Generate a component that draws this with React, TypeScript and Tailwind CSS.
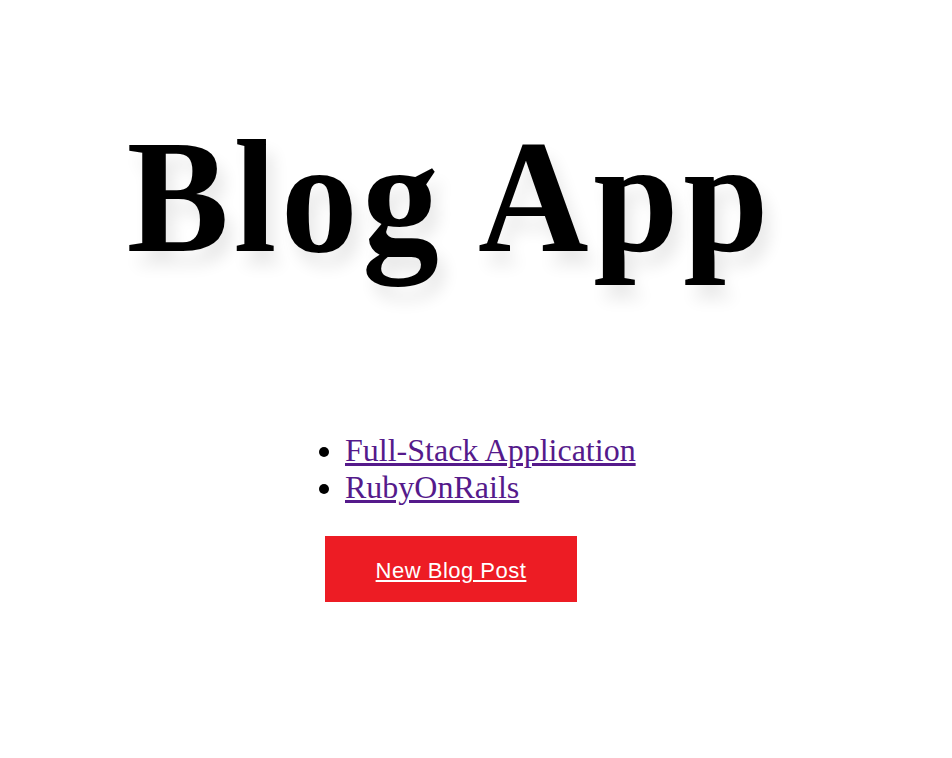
import React from "react";

export default function App() {
  return (
    <div className="min-h-[758px] w-[952px] bg-white">
      <div className="w-[900px] flex flex-col">
        <h1 className="mt-[104px] text-center text-[162px] leading-[1.15] font-bold text-black font-['Liberation_Serif',serif] [text-shadow:8px_14px_16px_rgba(0,0,0,0.09)]">
          <span className="inline-block scale-x-[0.945] tracking-[5px]">Blog App</span>
        </h1>
        <ul className="mt-[142px] ml-[345px] list-disc list-outside text-[32px] leading-[1.15] font-['Liberation_Serif',serif] text-black">
          <li>
            <a href="#" className="text-[#551a8b] underline">Full-Stack Application</a>
          </li>
          <li>
            <a href="#" className="text-[#551a8b] underline">RubyOnRails</a>
          </li>
        </ul>
        <div className="mt-[30px] ml-[325px]">
          <a
            href="#"
            className="flex h-[66px] w-[252px] items-center justify-center pt-[3px] bg-[#ed1c24] text-white underline font-['Liberation_Sans',sans-serif] text-[22px] tracking-[0.5px]"
          >
            New Blog Post
          </a>
        </div>
      </div>
    </div>
  );
}
